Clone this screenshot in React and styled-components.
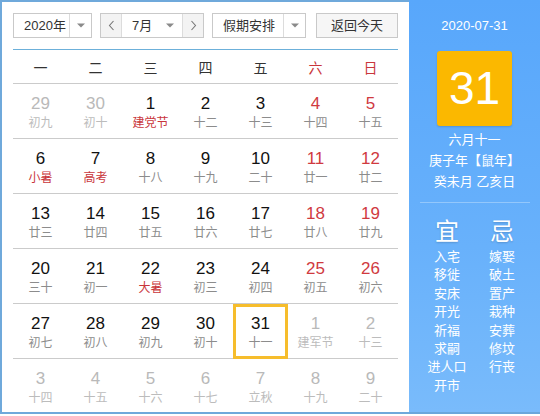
import React from 'react';
import styled, { createGlobalStyle } from 'styled-components';

const Global = createGlobalStyle`
  html, body { margin: 0; padding: 0; background: #fff; }
  body { font-family: "Liberation Sans", "Noto Sans CJK SC", Arial, sans-serif; color: #333; }
`;

const Frame = styled.div`
  display: flex;
  width: 540px;
  height: 414px;
`;

const Main = styled.div`
  width: 409px;
  box-sizing: border-box;
  border: 2px solid #6fa9db;
  border-right: none;
  padding: 11px 11px 0 11px;
  display: flex;
  flex-direction: column;
  background: #fff;
`;

const Toolbar = styled.div`
  display: flex;
  height: 25px;
  gap: 8px;
`;

const Box = styled.div`
  display: flex;
  height: 25px;
  box-sizing: border-box;
  border: 1px solid #c9c9c9;
  background: #fff;
`;

const BoxText = styled.div`
  width: ${(p) => p.$w}px;
  box-sizing: border-box;
  padding-left: ${(p) => p.$pl}px;
  font-size: 13px;
  line-height: 23px;
  color: #333;
  white-space: nowrap;
`;

const CaretZone = styled.div`
  width: ${(p) => p.$w || 22}px;
  box-sizing: border-box;
  display: flex;
  align-items: center;
  justify-content: center;
  border-left: ${(p) => (p.$line ? '1px solid #dcdcdc' : 'none')};
`;

const NavBtn = styled.div`
  width: ${(p) => p.$w}px;
  box-sizing: border-box;
  display: flex;
  align-items: center;
  justify-content: center;
  background: #f3f3f3;
  border-${(p) => p.$side}: 1px solid #dcdcdc;
`;

const TodayBtn = styled.div`
  width: 82px;
  height: 25px;
  box-sizing: border-box;
  margin-left: 2px;
  border: 1px solid #c9c9c9;
  background: #f6f6f6;
  font-size: 13px;
  line-height: 23px;
  text-align: center;
  color: #333;
`;

const BlueRule = styled.div`
  margin-top: 11px;
  height: 1px;
  background: #6cb0da;
`;

const WeekHeader = styled.div`
  display: grid;
  grid-template-columns: repeat(7, 55px);
  height: 33px;
  border-bottom: 1px solid #cbcbcb;
  align-items: center;
`;

const WeekDay = styled.div`
  text-align: center;
  font-size: 14px;
  color: ${(p) => (p.$weekend ? '#c9363b' : '#333')};
`;

const Row = styled.div`
  display: grid;
  grid-template-columns: repeat(7, 55px);
  height: ${(p) => (p.$last ? 'auto' : '55px')};
  flex: ${(p) => (p.$last ? 1 : 'none')};
  box-sizing: border-box;
  border-bottom: ${(p) => (p.$last ? 'none' : '1px solid #cbcbcb')};
`;

const numColors = { n: '#111', r: '#d03a3f', m: '#b9b9b9' };
const lunarColors = { n: '#8c8c8c', r: '#c9363b', m: '#bcbcbc' };

const Cell = styled.div`
  position: relative;
  display: flex;
  flex-direction: column;
  align-items: center;
  padding-top: 9px;
  ${(p) =>
    p.$today &&
    `&::after {
      content: '';
      position: absolute;
      left: 0;
      top: 0;
      width: 55px;
      height: 55px;
      box-sizing: border-box;
      border: 3px solid #f6bd2c;
    }`}
`;

const Num = styled.div`
  font-size: 17px;
  line-height: 22px;
  color: ${(p) => numColors[p.$c]};
`;

const Lunar = styled.div`
  font-size: 12px;
  line-height: 16px;
  color: ${(p) => lunarColors[p.$c]};
`;

const Panel = styled.div`
  width: 131px;
  box-sizing: border-box;
  background: linear-gradient(180deg, #58a7fb 0%, #68b1fb 60%, #79bbfb 100%);
  border-bottom: 2px solid #6aa7dc;
  padding-top: 17px;
  display: flex;
  flex-direction: column;
  align-items: center;
  color: #fff;
`;

const DateText = styled.div`
  font-size: 13px;
  line-height: 18px;
`;

const BigDay = styled.div`
  margin-top: 16px;
  width: 75px;
  height: 75px;
  border-radius: 3px;
  background: #fbb800;
  box-shadow: 0 1px 2px rgba(0, 0, 0, 0.15);
  font-size: 46px;
  line-height: 75px;
  text-align: center;
  color: #fff;
`;

const LunarInfo = styled.div`
  margin-top: 3px;
  font-size: 13px;
  line-height: 21px;
  text-align: center;
  white-space: nowrap;
`;

const PanelRule = styled.div`
  margin-top: 10px;
  width: 110px;
  height: 1px;
  background: rgba(255, 255, 255, 0.3);
`;

const YiJi = styled.div`
  margin-top: 14px;
  width: 110px;
  display: grid;
  grid-template-columns: 55px 55px;
`;

const YiJiCol = styled.div`
  display: flex;
  flex-direction: column;
  align-items: center;
`;

const YiJiHead = styled.div`
  font-size: 24px;
  line-height: 30px;
  text-shadow: 0 1px 2px rgba(0, 0, 0, 0.18);
  margin-bottom: 1px;
`;

const YiJiItem = styled.div`
  font-size: 13px;
  line-height: 18.4px;
  white-space: nowrap;
`;

const Caret = () => (
  <svg width="8" height="5" viewBox="0 0 8 5">
    <path d="M0 0.5 L8 0.5 L4 4.5 Z" fill="#8a8a8a" />
  </svg>
);

const Chevron = ({ dir }) => (
  <svg width="7" height="11" viewBox="0 0 7 11">
    <path
      d={dir === 'l' ? 'M5.5 1 L1.5 5.5 L5.5 10' : 'M1.5 1 L5.5 5.5 L1.5 10'}
      fill="none"
      stroke="#777"
      strokeWidth="1.1"
    />
  </svg>
);

const weeks = ['一', '二', '三', '四', '五', '六', '日'];

// [number, lunar, numColor, lunarColor, isToday]
const rows = [
  [['29', '初九', 'm', 'm'], ['30', '初十', 'm', 'm'], ['1', '建党节', 'n', 'r'], ['2', '十二', 'n', 'n'], ['3', '十三', 'n', 'n'], ['4', '十四', 'r', 'n'], ['5', '十五', 'r', 'n']],
  [['6', '小暑', 'n', 'r'], ['7', '高考', 'n', 'r'], ['8', '十八', 'n', 'n'], ['9', '十九', 'n', 'n'], ['10', '二十', 'n', 'n'], ['11', '廿一', 'r', 'n'], ['12', '廿二', 'r', 'n']],
  [['13', '廿三', 'n', 'n'], ['14', '廿四', 'n', 'n'], ['15', '廿五', 'n', 'n'], ['16', '廿六', 'n', 'n'], ['17', '廿七', 'n', 'n'], ['18', '廿八', 'r', 'n'], ['19', '廿九', 'r', 'n']],
  [['20', '三十', 'n', 'n'], ['21', '初一', 'n', 'n'], ['22', '大暑', 'n', 'r'], ['23', '初三', 'n', 'n'], ['24', '初四', 'n', 'n'], ['25', '初五', 'r', 'n'], ['26', '初六', 'r', 'n']],
  [['27', '初七', 'n', 'n'], ['28', '初八', 'n', 'n'], ['29', '初九', 'n', 'n'], ['30', '初十', 'n', 'n'], ['31', '十一', 'n', 'n', true], ['1', '建军节', 'm', 'm'], ['2', '十三', 'm', 'm']],
  [['3', '十四', 'm', 'm'], ['4', '十五', 'm', 'm'], ['5', '十六', 'm', 'm'], ['6', '十七', 'm', 'm'], ['7', '立秋', 'm', 'm'], ['8', '十九', 'm', 'm'], ['9', '二十', 'm', 'm']],
];

const yi = ['入宅', '移徙', '安床', '开光', '祈福', '求嗣', '进人口', '开市'];
const ji = ['嫁娶', '破土', '置产', '栽种', '安葬', '修坟', '行丧'];

export default function App() {
  return (
    <>
      <Global />
      <Frame>
        <Main>
          <Toolbar>
            <Box>
              <BoxText $w={55} $pl={10}>2020年</BoxText>
              <CaretZone $w={22} $line>
                <Caret />
              </CaretZone>
            </Box>
            <Box>
              <NavBtn $w={21} $side="right">
                <Chevron dir="l" />
              </NavBtn>
              <BoxText $w={35} $pl={10}>7月</BoxText>
              <CaretZone $w={25}>
                <Caret />
              </CaretZone>
              <NavBtn $w={21} $side="left">
                <Chevron dir="r" />
              </NavBtn>
            </Box>
            <Box>
              <BoxText $w={70} $pl={10}>假期安排</BoxText>
              <CaretZone $w={22} $line>
                <Caret />
              </CaretZone>
            </Box>
            <TodayBtn>返回今天</TodayBtn>
          </Toolbar>
          <BlueRule />
          <WeekHeader>
            {weeks.map((w, i) => (
              <WeekDay key={w} $weekend={i >= 5}>
                {w}
              </WeekDay>
            ))}
          </WeekHeader>
          {rows.map((r, ri) => (
            <Row key={ri} $last={ri === rows.length - 1}>
              {r.map(([n, l, nc, lc, today], ci) => (
                <Cell key={ci} $today={today}>
                  <Num $c={nc}>{n}</Num>
                  <Lunar $c={lc}>{l}</Lunar>
                </Cell>
              ))}
            </Row>
          ))}
        </Main>
        <Panel>
          <DateText>2020-07-31</DateText>
          <BigDay>31</BigDay>
          <LunarInfo>
            六月十一
            <br />
            庚子年【鼠年】
            <br />
            癸未月 乙亥日
          </LunarInfo>
          <PanelRule />
          <YiJi>
            <YiJiCol>
              <YiJiHead>宜</YiJiHead>
              {yi.map((t) => (
                <YiJiItem key={t}>{t}</YiJiItem>
              ))}
            </YiJiCol>
            <YiJiCol>
              <YiJiHead>忌</YiJiHead>
              {ji.map((t) => (
                <YiJiItem key={t}>{t}</YiJiItem>
              ))}
            </YiJiCol>
          </YiJi>
        </Panel>
      </Frame>
    </>
  );
}
